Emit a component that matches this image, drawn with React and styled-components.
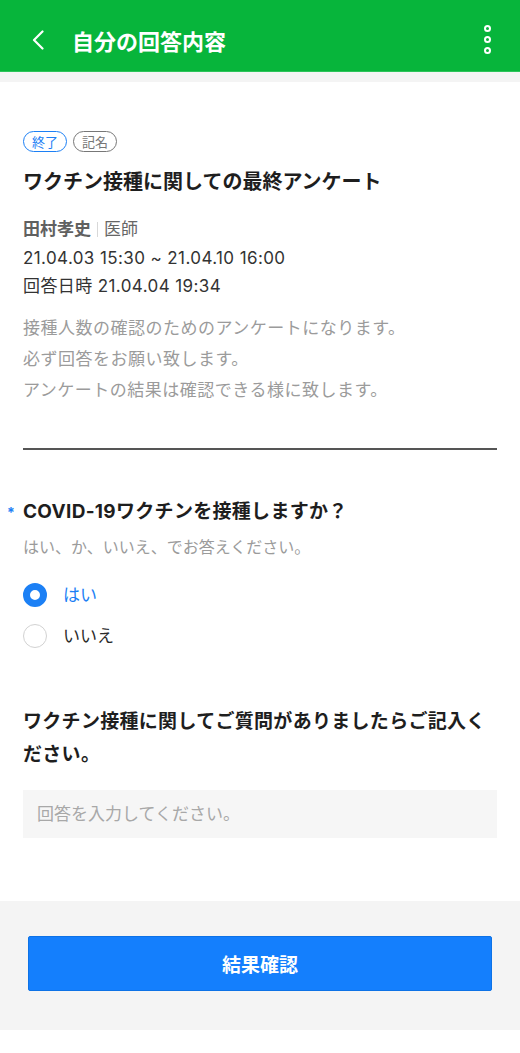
import styled, { createGlobalStyle } from "styled-components";

const GlobalStyle = createGlobalStyle`
  body {
    margin: 0;
    background: #ffffff;
    font-family: Inter, "Noto Sans CJK JP", sans-serif;
  }
  * {
    box-sizing: border-box;
  }
`;

const Page = styled.div`
  width: 520px;
  min-height: 1053px;
  display: flex;
  flex-direction: column;
  background: #ffffff;
`;

const Header = styled.header`
  height: 72px;
  background: #07b53b;
  display: flex;
  align-items: center;
  padding: 8px 29px 0 32px;
  border-bottom: 1px solid #2cc45a;
`;

const BackButton = styled.button`
  border: none;
  background: none;
  padding: 0;
  width: 16px;
  height: 24px;
  display: flex;
  align-items: center;
  cursor: pointer;
`;

const HeaderTitle = styled.h1`
  margin: 0 0 0 24px;
  flex: 1;
  color: #ffffff;
  font-size: 22px;
  font-weight: 700;
`;

const MenuButton = styled.button`
  border: none;
  background: none;
  padding: 0;
  display: flex;
  flex-direction: column;
  gap: 4px;
  cursor: pointer;
`;

const Dot = styled.span`
  width: 7px;
  height: 7px;
  border-radius: 50%;
  border: 2.2px solid #ffffff;
`;

const Strip = styled.div`
  height: 10px;
  background: #f4f4f4;
`;

const Content = styled.main`
  padding: 49px 23px 0 23px;
  flex: 1;
`;

const Tags = styled.div`
  display: flex;
  gap: 6px;
`;

const Tag = styled.span`
  height: 21px;
  padding: 0 8px;
  border-radius: 11px;
  border: 1.5px solid ${(p) => (p.$blue ? "#1c80f5" : "#777777")};
  color: ${(p) => (p.$blue ? "#1c80f5" : "#777777")};
  font-size: 13px;
  line-height: 18px;
  display: flex;
  align-items: center;
`;

const Title = styled.h2`
  margin: 16px 0 0 0;
  font-size: 20px;
  font-weight: 700;
  color: #1e1e1e;
  line-height: 28px;
`;

const Meta = styled.div`
  margin-top: 19px;
  display: flex;
  flex-direction: column;
  font-size: 17px;
  letter-spacing: 0.4px;
  line-height: 28.5px;
  color: #333333;
`;

const AuthorRow = styled.div`
  display: flex;
  align-items: center;
  color: #666666;
  letter-spacing: 0;
`;

const AuthorName = styled.span`
  font-weight: 700;
  color: #606060;
`;

const Separator = styled.span`
  width: 1px;
  height: 15px;
  background: #d8d8d8;
  margin: 0 6px 0 6px;
`;

const Description = styled.p`
  margin: 12px 0 0 0;
  font-size: 17px;
  letter-spacing: 0.5px;
  line-height: 31px;
  color: #9b9b9b;
`;

const Divider = styled.hr`
  margin: 42px 0 0 0;
  border: none;
  height: 2px;
  background: #555555;
`;

const Question = styled.section`
  margin-top: ${(p) => p.$top}px;
`;

const QuestionTitle = styled.h3`
  position: relative;
  margin: 0;
  font-size: 19px;
  font-weight: 700;
  letter-spacing: 0.3px;
  line-height: 33px;
  color: #1e1e1e;
`;

const Required = styled.span`
  position: absolute;
  left: -16px;
  top: 1px;
  color: #1c80f5;
  font-size: 14px;
  font-weight: 700;
`;

const Hint = styled.p`
  margin: 8px 0 0 0;
  font-size: 16px;
  line-height: 22px;
  color: #9b9b9b;
`;

const Options = styled.div`
  margin-top: 24px;
  display: flex;
  flex-direction: column;
  gap: 15px;
`;

const Option = styled.label`
  display: flex;
  align-items: center;
  gap: 16px;
  font-size: 17px;
  line-height: 26px;
  color: ${(p) => (p.$checked ? "#1c80f5" : "#2a2a2a")};
  cursor: pointer;
`;

const Radio = styled.span`
  width: 24px;
  height: 24px;
  border-radius: 50%;
  flex-shrink: 0;
  border: ${(p) => (p.$checked ? "7.5px solid #1c80f5" : "1.5px solid #d2d2d2")};
  background: #ffffff;
`;

const AnswerBox = styled.input`
  margin-top: 19px;
  width: 100%;
  height: 48px;
  border: none;
  outline: none;
  background: #f6f6f6;
  padding: 0 14px;
  font-family: inherit;
  font-size: 17px;
  color: #333333;

  &::placeholder {
    color: #a8a8a8;
  }
`;

const Footer = styled.footer`
  margin-top: 63px;
  background: #f4f4f4;
  padding: 35px 28px 39px 28px;
  margin-bottom: 24px;
`;

const SubmitButton = styled.button`
  width: 100%;
  height: 55px;
  border: 1px solid #0d72e6;
  border-radius: 2px;
  background: #147ffd;
  color: #ffffff;
  font-family: inherit;
  font-size: 19px;
  font-weight: 700;
  cursor: pointer;
`;

const App = () => {
  return (
    <Page>
      <GlobalStyle />
      <Header>
        <BackButton aria-label="戻る">
          <svg width="12" height="20" viewBox="0 0 12 20" fill="none">
            <path
              d="M10.5 1.5 L2 10 L10.5 18.5"
              stroke="#ffffff"
              strokeWidth="2.2"
              strokeLinecap="round"
              strokeLinejoin="round"
            />
          </svg>
        </BackButton>
        <HeaderTitle>自分の回答内容</HeaderTitle>
        <MenuButton aria-label="メニュー">
          <Dot />
          <Dot />
          <Dot />
        </MenuButton>
      </Header>
      <Strip />
      <Content>
        <Tags>
          <Tag $blue>終了</Tag>
          <Tag>記名</Tag>
        </Tags>
        <Title>ワクチン接種に関しての最終アンケート</Title>
        <Meta>
          <AuthorRow>
            <AuthorName>田村孝史</AuthorName>
            <Separator />
            <span>医師</span>
          </AuthorRow>
          <span>21.04.03 15:30 ~ 21.04.10 16:00</span>
          <span>回答日時 21.04.04 19:34</span>
        </Meta>
        <Description>
          接種人数の確認のためのアンケートになります。
          <br />
          必ず回答をお願い致します。
          <br />
          アンケートの結果は確認できる様に致します。
        </Description>
        <Divider />

        <Question $top={45}>
          <QuestionTitle>
            <Required>*</Required>
            COVID-19ワクチンを接種しますか？
          </QuestionTitle>
          <Hint>はい、か、いいえ、でお答えください。</Hint>
          <Options>
            <Option $checked>
              <Radio $checked />
              はい
            </Option>
            <Option>
              <Radio />
              いいえ
            </Option>
          </Options>
        </Question>

        <Question $top={56}>
          <QuestionTitle>
            ワクチン接種に関してご質問がありましたらご記入ください。
          </QuestionTitle>
          <AnswerBox placeholder="回答を入力してください。" />
        </Question>
      </Content>
      <Footer>
        <SubmitButton>結果確認</SubmitButton>
      </Footer>
    </Page>
  );
};

export default App;
